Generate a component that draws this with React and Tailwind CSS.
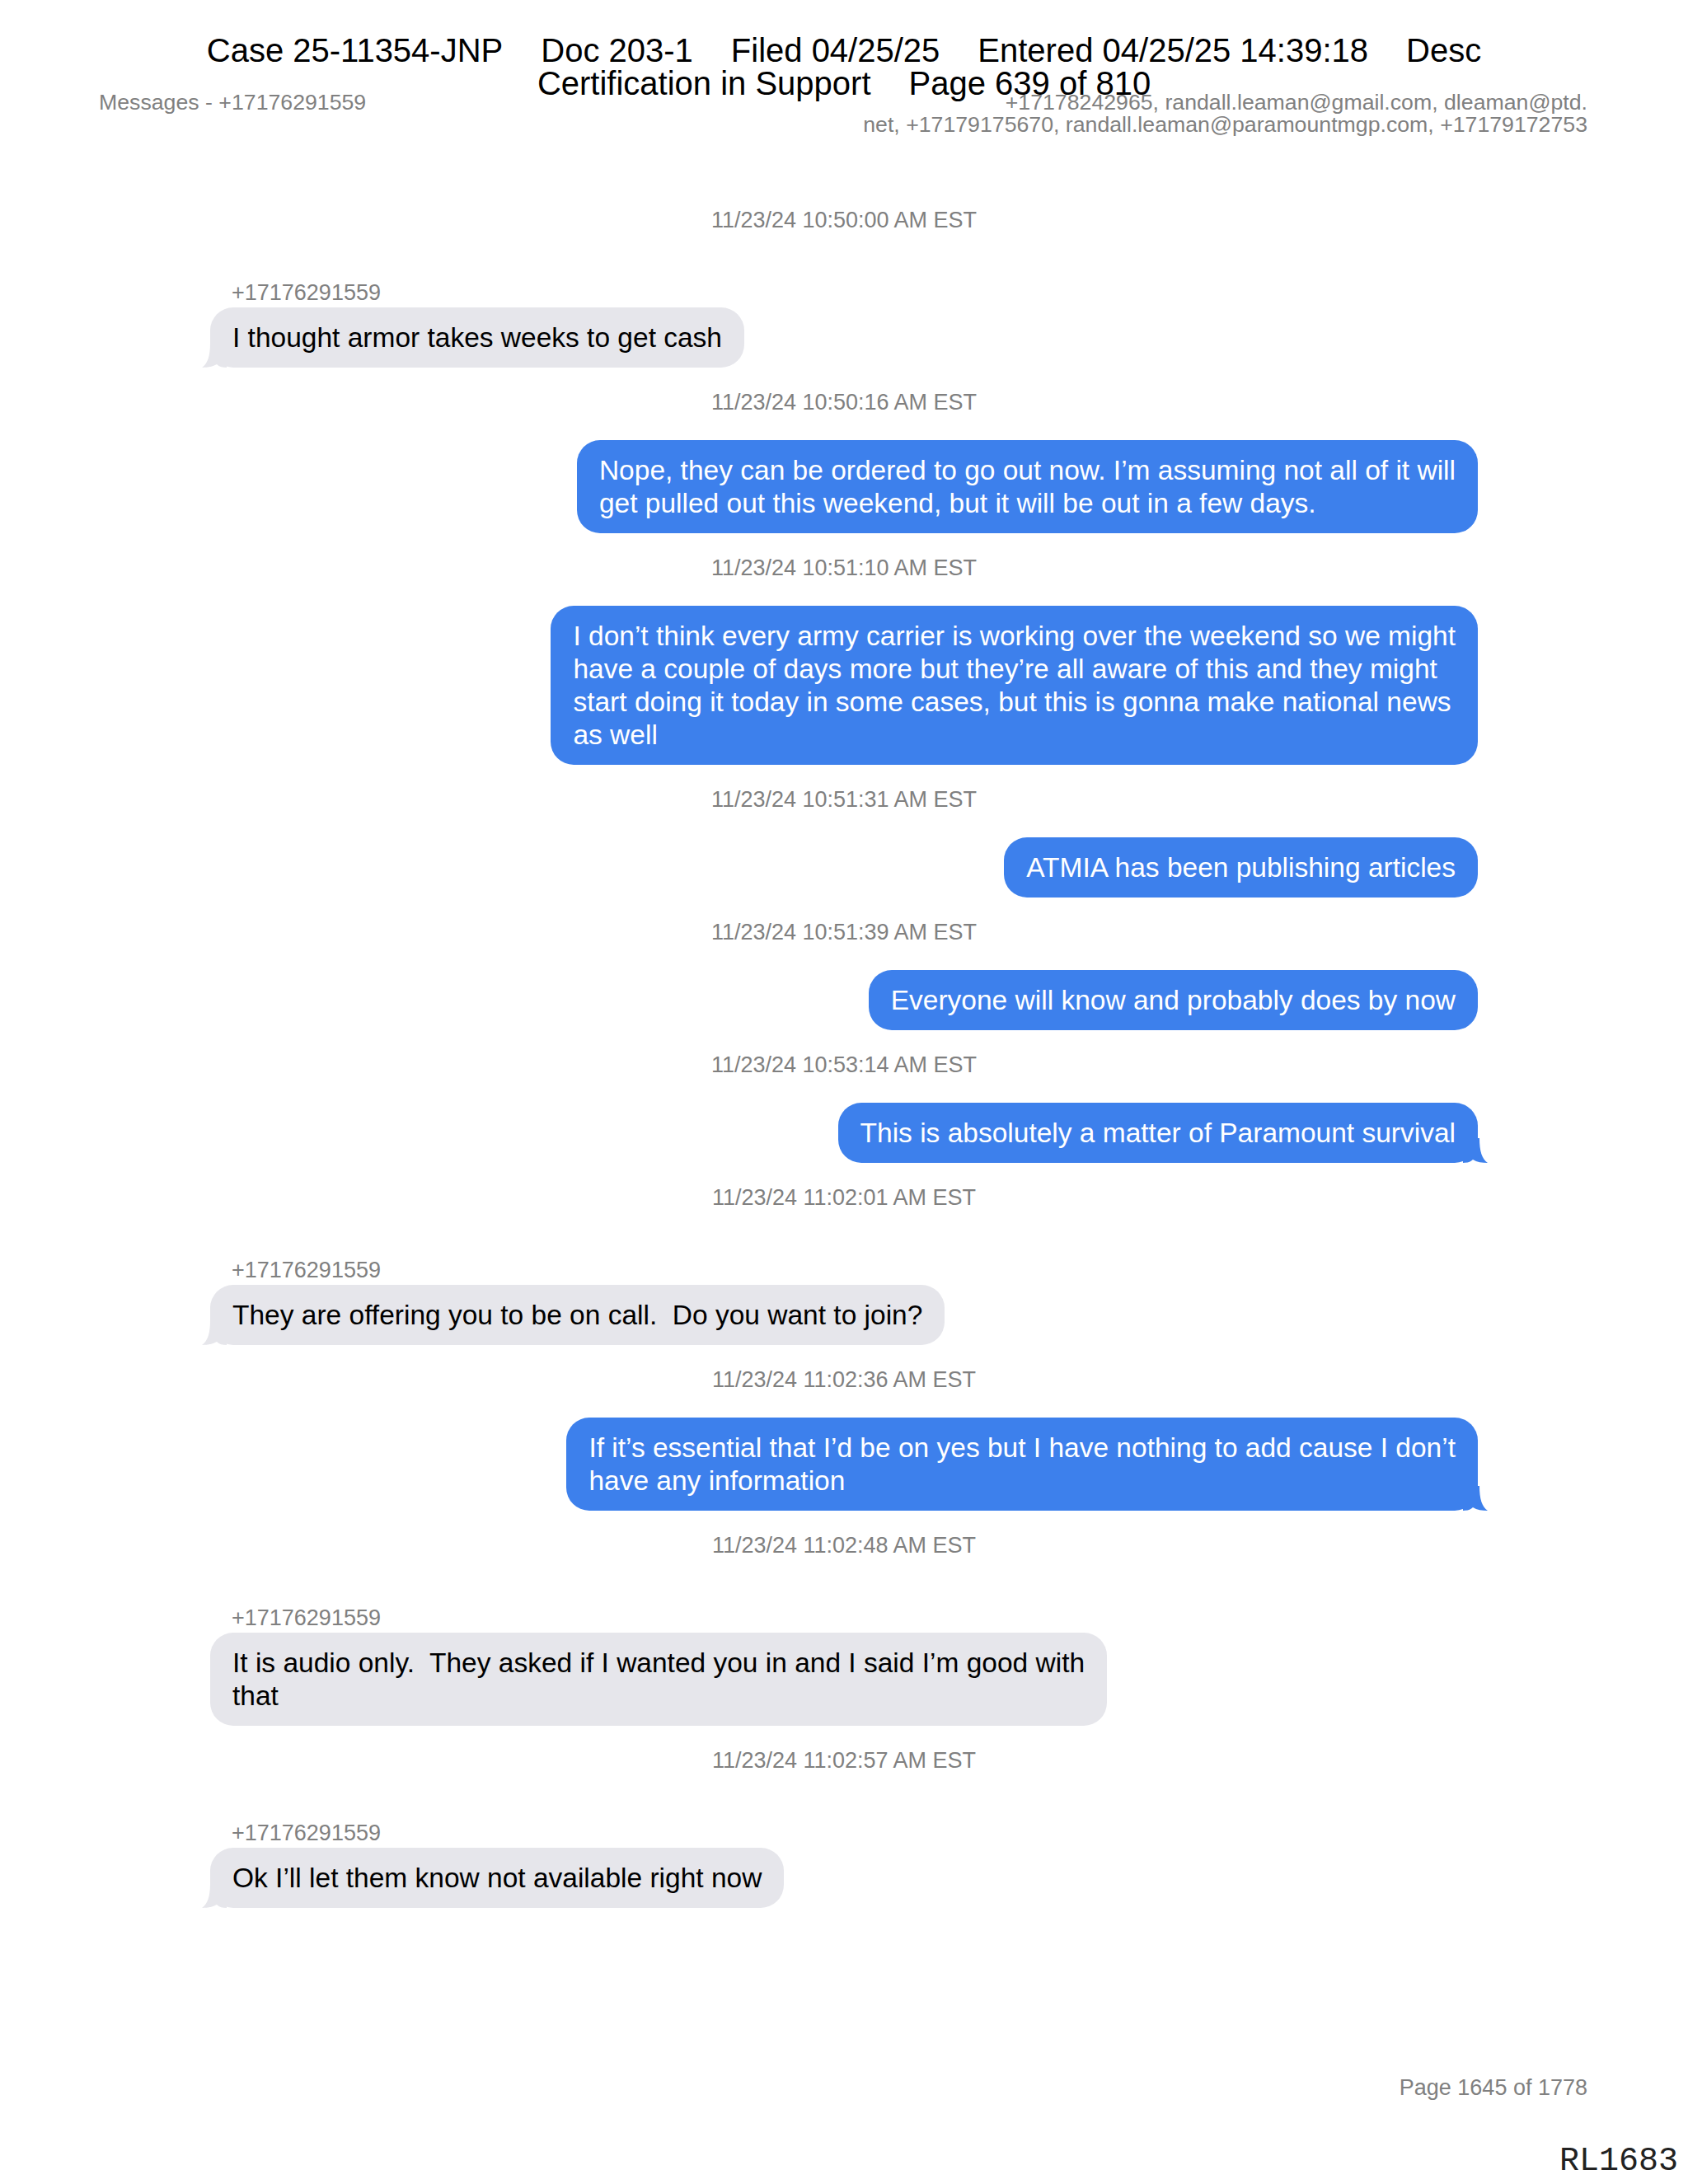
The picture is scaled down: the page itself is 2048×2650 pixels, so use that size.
import React from 'react';

const SANS = { fontFamily: '"Liberation Sans", Arial, sans-serif' };

const THEM = '+17176291559';

const MESSAGES = [
    { time: '11/23/24 10:50:00 AM EST', them: true, tail: true, lines: ['I thought armor takes weeks to get cash'] },
    { time: '11/23/24 10:50:16 AM EST', lines: ['Nope, they can be ordered to go out now. I’m assuming not all of it will', 'get pulled out this weekend, but it will be out in a few days.'] },
    {
        time: '11/23/24 10:51:10 AM EST',
        lines: [
            'I don’t think every army carrier is working over the weekend so we might',
            'have a couple of days more but they’re all aware of this and they might',
            'start doing it today in some cases, but this is gonna make national news',
            'as well',
        ],
    },
    { time: '11/23/24 10:51:31 AM EST', lines: ['ATMIA has been publishing articles'] },
    { time: '11/23/24 10:51:39 AM EST', lines: ['Everyone will know and probably does by now'] },
    { time: '11/23/24 10:53:14 AM EST', tail: true, lines: ['This is absolutely a matter of Paramount survival'] },
    { time: '11/23/24 11:02:01 AM EST', them: true, tail: true, lines: ['They are offering you to be on call.  Do you want to join?'] },
    { time: '11/23/24 11:02:36 AM EST', tail: true, lines: ['If it’s essential that I’d be on yes but I have nothing to add cause I don’t', 'have any information'] },
    { time: '11/23/24 11:02:48 AM EST', them: true, lines: ['It is audio only.  They asked if I wanted you in and I said I’m good with', 'that'] },
    { time: '11/23/24 11:02:57 AM EST', them: true, tail: true, lines: ['Ok I’ll let them know not available right now'] },
];

function Tail({ them }) {
    // little iMessage hook at the bottom corner
    return (
        <svg
            viewBox="0 0 30 30"
            className={`absolute bottom-0 h-[30px] w-[30px] ${them ? 'left-[-10px]' : 'right-[-12px] -scale-x-100'}`}
        >
            <path
                d="M30 0 L10 0 C10 16 7 25 0 30 C7 30 13 29 18 26 C21 29 25 30 30 30 Z"
                fill={them ? '#e6e6eb' : '#3d80ec'}
            />
        </svg>
    );
}

function Bubble({ msg }) {
    return (
        <div
            className={`relative inline-block rounded-[28px] px-[27px] py-[16.5px] text-[33.5px] leading-[40px] whitespace-pre ${msg.them ? 'bg-[#e6e6eb] text-black' : 'bg-[#3d80ec] text-white'}`}
        >
            {msg.tail && <Tail them={msg.them} />}
            <div className="relative">
                {msg.lines.map((l, i) => (
                    <div key={i}>{l}</div>
                ))}
            </div>
        </div>
    );
}

export default function App() {
    return (
        <div className="relative flex h-[2650px] w-[2048px] flex-col bg-white" style={SANS}>
            {/* court filing stamp over the page */}
            <div className="absolute left-0 right-0 top-[41px] text-[40px] leading-[40px] text-black">
                <div className="flex justify-center gap-[46px]">
                    <span>Case 25-11354-JNP</span>
                    <span>Doc 203-1</span>
                    <span>Filed 04/25/25</span>
                    <span>Entered 04/25/25 14:39:18</span>
                    <span>Desc</span>
                </div>
                <div className="flex justify-center gap-[46px]">
                    <span>Certification in Support</span>
                    <span>Page 639 of 810</span>
                </div>
            </div>

            <div className="flex justify-between pl-[120px] pr-[122px] pt-[111px] text-[26.7px] leading-[27px] text-[#808080]">
                <span>Messages - {THEM}</span>
                <span className="text-right">
                    +17178242965, randall.leaman@gmail.com, dleaman@ptd.
                    <br />
                    net, +17179175670, randall.leaman@paramountmgp.com, +17179172753
                </span>
            </div>

            <div className="mt-[60px] flex flex-col">
                {MESSAGES.map((m, i) => (
                    <React.Fragment key={i}>
                        <p className="mt-[26px] text-center text-[27px] leading-[32px] text-[#808080]">{m.time}</p>
                        {m.them ? (
                            <>
                                <p className="mt-[56px] pl-[281px] text-[27px] leading-[32px] text-[#808080]">{THEM}</p>
                                <div className="mt-[2px] pl-[255px]">
                                    <Bubble msg={m} />
                                </div>
                            </>
                        ) : (
                            <div className="mt-[30px] flex justify-end pr-[255px]">
                                <Bubble msg={m} />
                            </div>
                        )}
                    </React.Fragment>
                ))}
            </div>

            <div className="mt-auto flex flex-col items-end pb-[7px]">
                <p className="pr-[122px] text-[27px] leading-[32px] text-[#808080]">Page 1645 of 1778</p>
                <p
                    className="mt-[54px] pr-[12px] text-[40px] leading-[40px] text-[#222]"
                    style={{ fontFamily: '"Liberation Mono", "Courier New", monospace' }}
                >
                    RL1683
                </p>
            </div>
        </div>
    );
}
